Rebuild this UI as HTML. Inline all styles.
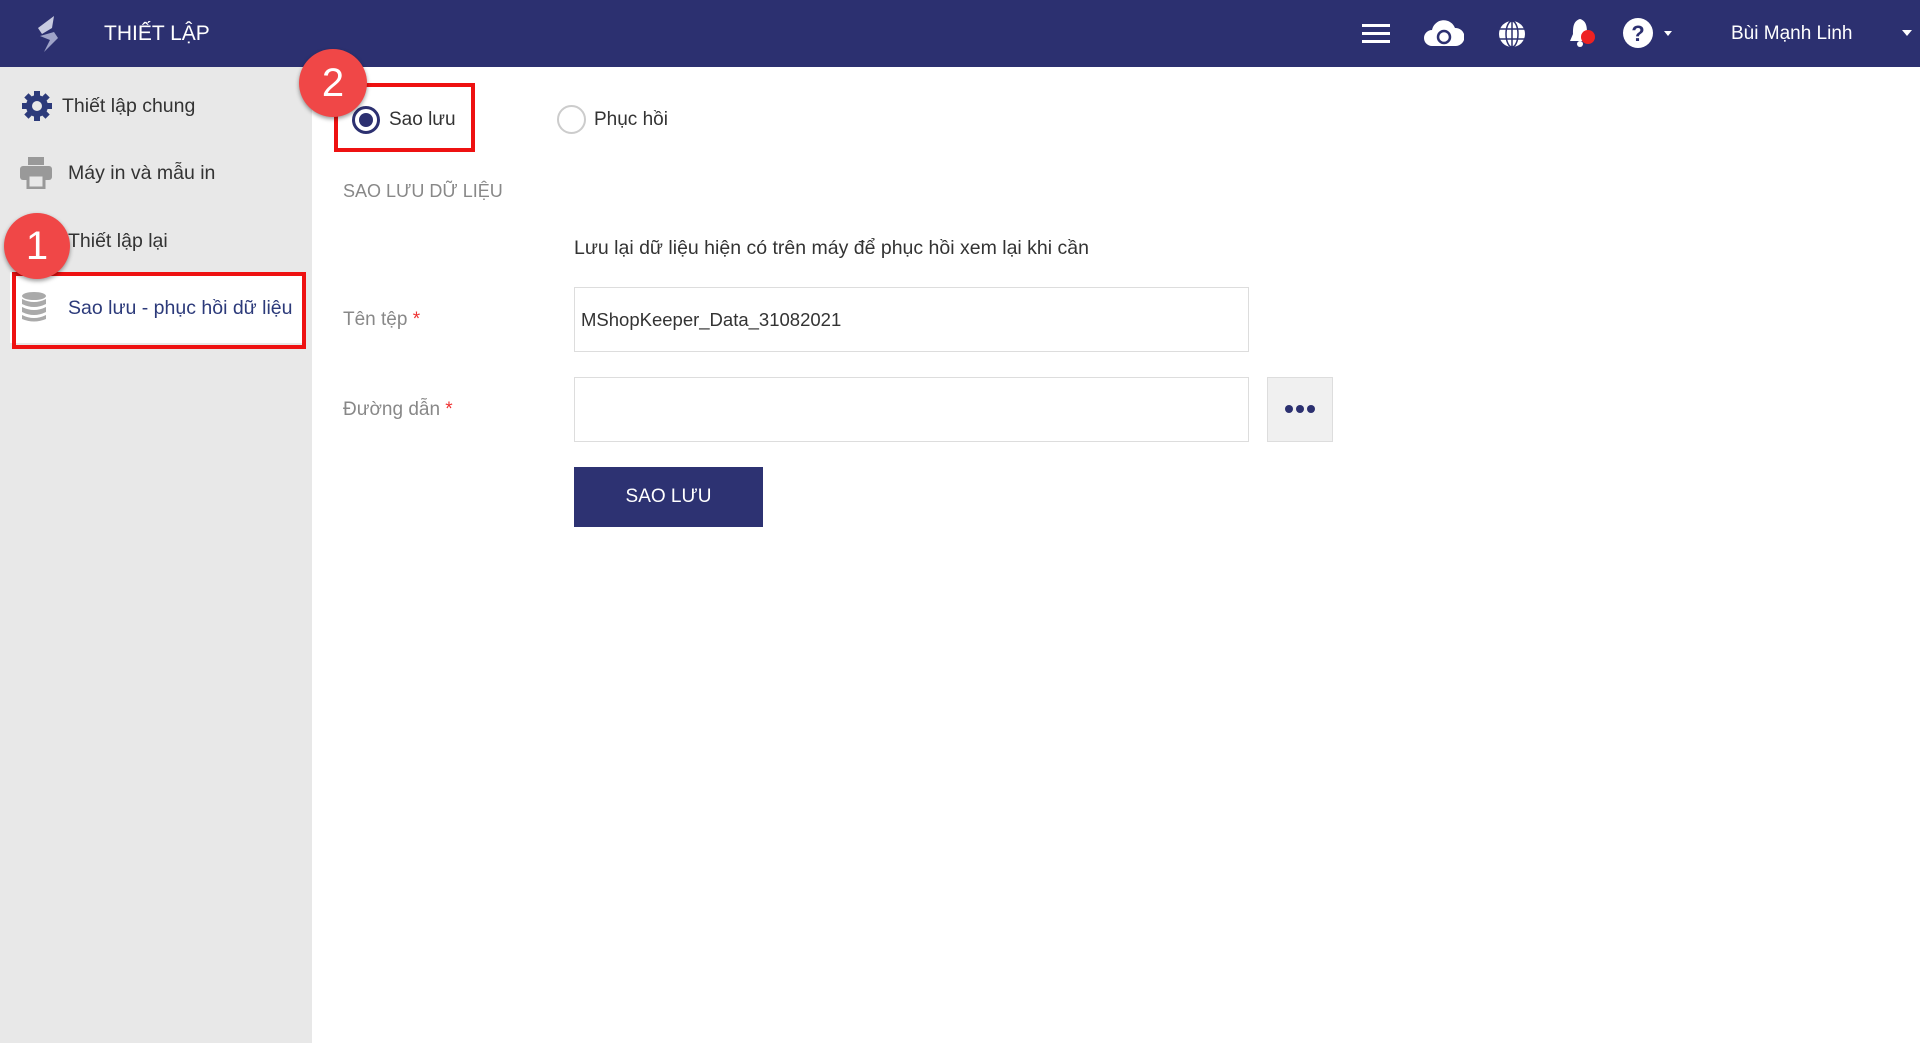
<!DOCTYPE html>
<html><head><meta charset="utf-8"><style>
*{margin:0;padding:0;box-sizing:border-box}
body{width:1920px;height:1043px;overflow:hidden;background:#fff;font-family:"Liberation Sans",sans-serif;position:relative}
.a{position:absolute}
.hdr{left:0;top:0;width:1920px;height:67px;background:#2c3070}
.side{left:0;top:67px;width:312px;height:976px;background:#e8e8e8}
.t{font-size:19px;color:#333;white-space:nowrap}
.redbox{border:4px solid #ee1111}
.num{border-radius:50%;background:#f04747;color:#fff;text-align:center;font-size:40px;box-shadow:0 2px 4px rgba(0,0,0,.4)}
.inp{border:1px solid #ddd;background:#fff}
</style></head><body>
<div class="a hdr"></div>
<svg class="a" style="left:32px;top:14px" width="34" height="40" viewBox="0 0 34 40"><path d="M22 2 L6 14 L10 20 L20 14 Z" fill="#c8cbe0"/><path d="M8 22 L22 18 L26 24 L12 38 L18 26 Z" fill="#9fa3c8"/></svg>
<div class="a" style="left:104px;top:22px;font-size:21px;color:#fff">THIẾT LẬP</div>
<svg class="a" style="left:1362px;top:22px" width="28" height="22"><rect y="2" width="28" height="3" fill="#fff"/><rect y="10" width="28" height="3" fill="#fff"/><rect y="18" width="28" height="3" fill="#fff"/></svg>
<svg class="a" style="left:1424px;top:18px" width="40" height="30" viewBox="0 0 40 30"><path d="M8 28 A8 8 0 0 1 8 12 A12 12 0 0 1 31 10 A9 9 0 0 1 32 28 Z" fill="#fff"/><circle cx="20" cy="19" r="6" fill="none" stroke="#2c3070" stroke-width="2.5"/></svg>
<svg class="a" style="left:1496px;top:18px" width="32" height="32" viewBox="0 0 32 32"><circle cx="16" cy="16" r="13" fill="#fff"/><g stroke="#2c3070" stroke-width="1.5" fill="none"><ellipse cx="16" cy="16" rx="6" ry="13"/><line x1="16" y1="3" x2="16" y2="29"/><line x1="3" y1="11" x2="29" y2="11"/><line x1="3" y1="21" x2="29" y2="21"/></g></svg>
<svg class="a" style="left:1566px;top:16px" width="32" height="34" viewBox="0 0 32 34"><path d="M14 3 C7 5 7 12 7 18 L4 25 L24 25 L21 18 C21 12 21 5 14 3Z" fill="#fff"/><circle cx="14" cy="28" r="3" fill="#fff"/><circle cx="22" cy="21" r="7" fill="#ee2222"/></svg>
<svg class="a" style="left:1622px;top:17px" width="60" height="32"><circle cx="16" cy="16" r="15" fill="#fff"/><text x="16" y="24" text-anchor="middle" font-family="Liberation Sans" font-weight="bold" font-size="22" fill="#2c3070">?</text><path d="M42 14 L50 14 L46 19Z" fill="#fff"/></svg>
<div class="a" style="left:1731px;top:23px;font-size:19px;color:#fff">Bùi Mạnh Linh</div>
<svg class="a" style="left:1902px;top:30px" width="12" height="8"><path d="M0 0 L10 0 L5 6Z" fill="#fff"/></svg>

<div class="a side"></div>
<div class="a" style="left:10px;top:272px;width:296px;height:71px;background:#fff"></div>
<svg class="a" style="left:21px;top:90px" width="32" height="32" viewBox="0 0 32 32"><g fill="#2c3a7a"><circle cx="16" cy="16" r="11"/><rect x="13" y="1" width="6" height="30"/><rect x="1" y="13" width="30" height="6"/><rect x="13" y="1" width="6" height="30" transform="rotate(45 16 16)"/><rect x="13" y="1" width="6" height="30" transform="rotate(-45 16 16)"/></g><circle cx="16" cy="16" r="5" fill="#e8e8e8"/></svg>
<div class="a t" style="left:62px;top:95px;font-size:19.5px">Thiết lập chung</div>
<svg class="a" style="left:20px;top:157px" width="32" height="32" viewBox="0 0 32 32"><g fill="#999"><rect x="8" y="0" width="16" height="8"/><rect x="0" y="9" width="32" height="14" rx="3"/><rect x="8" y="18" width="16" height="13" fill="#e8e8e8" stroke="#999" stroke-width="3"/></g></svg>
<div class="a t" style="left:68px;top:162px;font-size:19.5px">Máy in và mẫu in</div>
<div class="a t" style="left:68px;top:230px;font-size:19.5px">Thiết lập lại</div>
<svg class="a" style="left:20px;top:291px" width="28" height="32" viewBox="0 0 28 32"><g fill="#aaa"><ellipse cx="14" cy="5" rx="12" ry="4"/><path d="M2 8 Q14 14 26 8 V13 Q14 19 2 13Z"/><path d="M2 16 Q14 22 26 16 V21 Q14 27 2 21Z"/><path d="M2 24 Q14 30 26 24 V28 Q14 33 2 28Z"/></g></svg>
<div class="a t" style="left:68px;top:297px;color:#2c3a7a;font-size:19.5px">Sao lưu - phục hồi dữ liệu</div>
<div class="a redbox" style="left:12px;top:272px;width:294px;height:77px"></div>
<div class="a num" style="left:4px;top:213px;width:66px;height:66px;line-height:66px">1</div>

<div class="a" style="left:352px;top:106px;width:28px;height:28px;border-radius:50%;border:3px solid #2c3070;background:#fff"></div>
<div class="a" style="left:359px;top:113px;width:14px;height:14px;border-radius:50%;background:#2c3070"></div>
<div class="a t" style="left:389px;top:109px">Sao lưu</div>
<div class="a" style="left:557px;top:105px;width:29px;height:29px;border-radius:50%;border:2px solid #ccc;background:#fff"></div>
<div class="a t" style="left:594px;top:109px">Phục hồi</div>
<div class="a redbox" style="left:334px;top:83px;width:141px;height:69px"></div>
<div class="a num" style="left:299px;top:49px;width:68px;height:68px;line-height:68px">2</div>

<div class="a t" style="left:343px;top:181px;color:#888;font-size:18px">SAO LƯU DỮ LIỆU</div>
<div class="a t" style="left:574px;top:237px;font-size:19.5px">Lưu lại dữ liệu hiện có trên máy để phục hồi xem lại khi cần</div>
<div class="a t" style="left:343px;top:309px;color:#888;font-size:19px">Tên tệp <span style="color:#e33">*</span></div>
<div class="a inp" style="left:574px;top:287px;width:675px;height:65px"></div>
<div class="a t" style="left:581px;top:309px;font-size:18.5px">MShopKeeper_Data_31082021</div>
<div class="a t" style="left:343px;top:399px;color:#888;font-size:19px">Đường dẫn <span style="color:#e33">*</span></div>
<div class="a inp" style="left:574px;top:377px;width:675px;height:65px"></div>
<div class="a" style="left:1267px;top:377px;width:66px;height:65px;background:#f0f0f0;border:1px solid #ddd"></div>
<svg class="a" style="left:1284px;top:404px" width="32" height="10"><circle cx="5" cy="5" r="4" fill="#2c3070"/><circle cx="16" cy="5" r="4" fill="#2c3070"/><circle cx="27" cy="5" r="4" fill="#2c3070"/></svg>
<div class="a" style="left:574px;top:467px;width:189px;height:60px;background:#2d3272;color:#fff;font-size:19px;text-align:center;line-height:60px">SAO LƯU</div>
</body></html>
